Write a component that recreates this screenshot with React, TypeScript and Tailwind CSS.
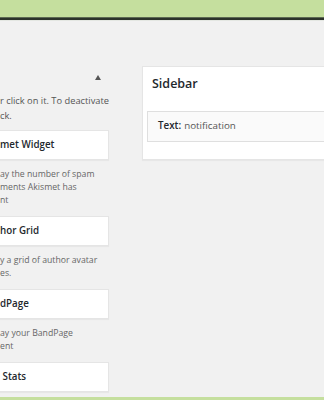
const font = { fontFamily: '"Open Sans", "Noto Sans", Arial, sans-serif' };

function WidgetBox({ title }: { title: string }) {
  return (
    <div className="h-[30px] w-[109px] flex items-center bg-white shadow-[0_1px_1px_rgba(0,0,0,0.04)] border border-l-0 border-[#e5e5e5]">
      <span className="text-[9.8px] font-semibold text-[#23282d] whitespace-pre">{title}</span>
    </div>
  );
}

function WidgetDesc({ lines }: { lines: string[] }) {
  return (
    <div className="pt-[8px] pb-[9px] text-[8.7px] leading-[13px] text-[#666]">
      {lines.map((line) => (
        <div key={line} className="whitespace-nowrap">
          {line}
        </div>
      ))}
    </div>
  );
}

export default function App() {
  return (
    <div className="w-[324px] h-[400px] overflow-hidden bg-[#f1f1f1] flex flex-col" style={font}>
      <div className="h-[17px] shrink-0 bg-[#c5df9e]" />
      <div className="h-[1px] shrink-0 bg-[#5d6a52]" />
      <div className="h-[2px] shrink-0 bg-[#2c332a]" />
      <div className="h-[1px] shrink-0 bg-[#e4e7e2]" />

      <div className="flex flex-1 min-h-0">
        {/* available widgets */}
        <div className="w-[110px] shrink-0 flex flex-col overflow-hidden">
          <div className="pt-[54px] h-[60px] flex justify-end pr-[9px]">
            <div className="w-0 h-0 border-l-[3px] border-r-[3px] border-b-[5px] border-l-transparent border-r-transparent border-b-[#555]" />
          </div>
          <div className="pt-[12px] pb-[7px] text-[9.3px] leading-[15px] text-[#555]">
            <div className="whitespace-nowrap">r click on it. To deactivate</div>
            <div className="whitespace-nowrap">ck.</div>
          </div>
          <WidgetBox title="met Widget" />
          <WidgetDesc lines={["ay the number of spam", "ments Akismet has", "nt"]} />
          <WidgetBox title="hor Grid" />
          <WidgetDesc lines={["y a grid of author avatar", "es."]} />
          <WidgetBox title="dPage" />
          <WidgetDesc lines={["ay your BandPage", "ent"]} />
          <WidgetBox title=" Stats" />
        </div>

        {/* sidebar area */}
        <div className="flex-1 pl-[32px] pt-[45px]">
          <div className="h-[94px] bg-white border border-r-0 border-[#e5e5e5] shadow-[0_1px_1px_rgba(0,0,0,0.04)] flex flex-col">
            <div className="h-[33px] pl-[9px] pt-[1px] flex items-center text-[12.5px] font-semibold text-[#23282d]">
              Sidebar
            </div>
            <div className="mt-[11px] ml-[4px] h-[31px] bg-[#fafafa] border border-r-0 border-[#dfdfdf] flex items-center pl-[10px] text-[9.8px] text-[#23282d]">
              <span className="font-semibold">Text:</span>
              <span className="ml-[3px] text-[#555]">notification</span>
            </div>
          </div>
        </div>
      </div>

      <div className="h-[3px] shrink-0 bg-[#c5df9e]" />
    </div>
  );
}
